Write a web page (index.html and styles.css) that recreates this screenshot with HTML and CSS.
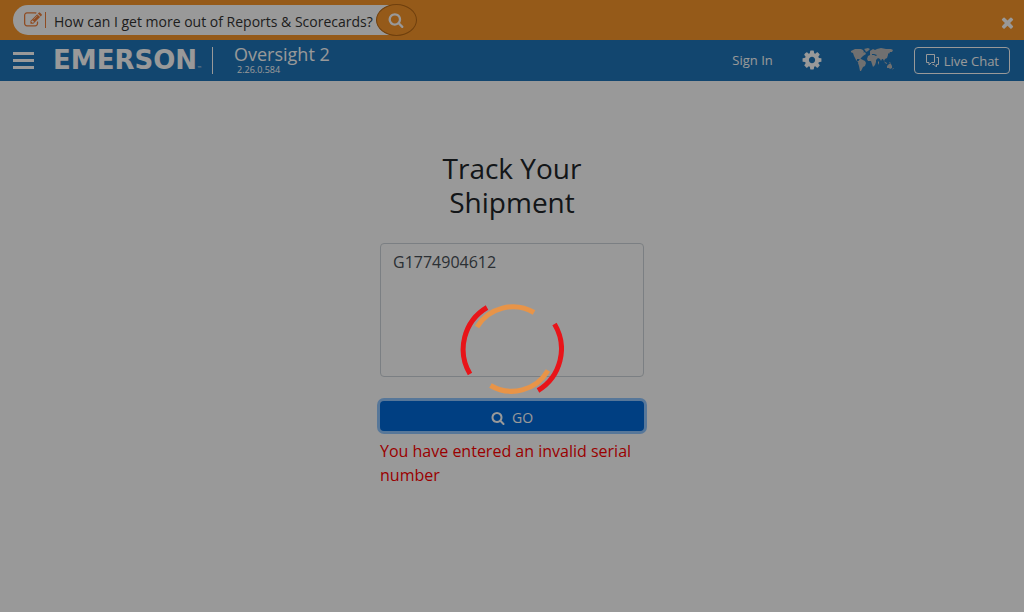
FILE: index.html
```html
<!DOCTYPE html>
<html lang="en">
<head>
<meta charset="utf-8">
<meta name="viewport" content="width=device-width, initial-scale=1">
<title>Oversight 2 - Track Your Shipment</title>
<link rel="stylesheet" href="styles.css">
</head>
<body>
<svg class="sprite" aria-hidden="true">
  <symbol id="search" viewBox="0 0 1792 1792"><path d="M1216 832q0-185-131.5-316.5t-316.5-131.5-316.5 131.5-131.5 316.5 131.5 316.5 316.5 131.5 316.5-131.5 131.5-316.5zm512 832q0 52-38 90t-90 38q-54 0-90-38l-343-342q-179 124-399 124-143 0-273.5-55.5t-225-150-150-225-55.5-273.5 55.5-273.5 150-225 225-150 273.5-55.5 273.5 55.5 225 150 150 225 55.5 273.5q0 220-124 399l343 343q37 37 37 90z"/></symbol>
</svg>

<form class="ask-bar">
  <div class="ask-pill">
    <svg class="icon-edit" viewBox="0 0 1792 1792" aria-hidden="true"><path d="M888 1184l116-116-152-152-116 116v56h96v96h56zm440-720q-16-16-33 1l-350 350q-17 17-1 33t33-1l350-350q17-17 1-33zm80 594v190q0 119-84.5 203.5t-203.5 84.5h-832q-119 0-203.5-84.5t-84.5-203.5v-832q0-119 84.5-203.5t203.5-84.5h832q63 0 117 25 15 7 18 23 3 17-9 29l-49 49q-14 14-32 8-23-6-45-6h-832q-66 0-113 47t-47 113v832q0 66 47 113t113 47h832q66 0 113-47t47-113v-126q0-13 9-22l64-64q15-15 35-7t20 29zm-96-738l288 288-672 672h-288v-288zm444 132l-92 92-288-288 92-92q28-28 68-28t68 28l152 152q28 28 28 68t-28 68z"/></svg>
    <span class="ask-divider"></span>
    <input class="ask-input" type="text" aria-label="Ask a question" value="How can I get more out of Reports &amp; Scorecards?">
  </div>
  <button class="ask-button" type="button" aria-label="Search"><svg class="icon-search-lg" aria-hidden="true"><use href="#search"/></svg></button>
  <button class="close-button" type="button" aria-label="Close"><svg class="icon-close" viewBox="0 0 1792 1792" aria-hidden="true"><path d="M1490 1322q0 40-28 68l-136 136q-28 28-68 28t-68-28l-294-294-294 294q-28 28-68 28t-68-28l-136-136q-28-28-28-68t28-68l294-294-294-294q-28-28-28-68t28-68l136-136q28-28 68-28t68 28l294 294 294-294q28-28 68-28t68 28l136 136q28 28 28 68t-28 68l-294 294 294 294q28 28 28 68z"/></svg></button>
</form>

<header class="header">
  <button class="menu-button" type="button" aria-label="Menu"><span class="bar"></span><span class="bar"></span><span class="bar"></span></button>
  <a class="logo" href="#">EMERSON<span class="trademark">™</span></a>
  <div class="product">
    <span class="product-name">Oversight 2</span>
    <span class="product-version">2.26.0.584</span>
  </div>
  <nav class="tools">
    <a class="sign-in" href="#">Sign In</a>
    <button class="icon-button" type="button" aria-label="Settings"><svg class="icon-cog" viewBox="0 0 1792 1792" aria-hidden="true"><path d="M1152 896q0-106-75-181t-181-75-181 75-75 181 75 181 181 75 181-75 75-181zm512-109v222q0 12-8 23t-20 13l-185 28q-19 54-39 91 35 50 107 138 10 12 10 25t-9 23q-27 37-99 108t-94 71q-12 0-26-9l-138-108q-44 23-91 38-16 136-29 186-7 28-36 28h-222q-14 0-24.500-8.500t-11.500-21.500l-28-184q-49-16-90-37l-141 107q-10 9-25 9-14 0-25-11-126-114-165-168-7-10-7-23 0-12 8-23 15-21 51-66.500t54-70.500q-27-50-41-99l-183-27q-13-2-21-12.500t-8-23.500v-222q0-12 8-23t19-13l186-28q14-46 39-92-40-57-107-138-10-12-10-24 0-10 9-23 26-36 98.500-107.500t94.500-71.500q13 0 26 10l138 107q44-23 91-38 16-136 29-186 7-28 36-28h222q14 0 24.500 8.500t11.500 21.500l28 184q49 16 90 37l142-107q9-9 24-9 13 0 25 10 129 119 165 170 7 8 7 22 0 12-8 23-15 21-51 66.500t-54 70.500q26 50 41 98l183 28q13 2 21 12.500t8 23.500z"/></svg></button>
    <button class="icon-button" type="button" aria-label="Region"><svg class="icon-world" viewBox="0 0 44 24" aria-hidden="true"><path d="M0 3l4-2 6 0 2 1 1 2-1 1 2-1 1 2-3 2-2 2-1 2-1-1-2 0 0 2 2 0 1 2-2-1-2-2-2-4-1-3-3-1zM13 1l4-1 2 1-2 2-2 1-1-2zM8 12l2-1 4 2 1 2-1 3-2 1-1 2-1 2-1 0-1-5-1-3zM19 5l0-2 3-2 2 1 2-1 4-1 5 1 5 0 2 1-1 2-2 0-1 2-1-1 0 2-1 3-2 1-1 2-1-2-1 0-1 2-1-2-2-1-1 1-1 1 0 2-1 3-2 2-1-3-1-3-3 0-1-2 1-3 2-1zM21 6l0 1 2 0 2 1 1-1-3-1zM27 14l1-1 0 2-1 2zM33 13l1 1 2 1 0 1-2-1zM38 14l2 1-1 1zM36 18l2-2 2 0 1 2 0 2-2 1-1-1-2 0zM42 20l1 0-2 2z"/></svg></button>
    <button class="chat-button" type="button"><svg class="icon-chat" viewBox="0 0 15 15" aria-hidden="true"><path d="M1.500 1.500h8v8H6.500L4 12V9.500H1.500zM11.500 4.500h2v7h-2v2.500L9 11.500H7.500"/></svg>Live Chat</button>
  </nav>
</header>

<main class="main">
  <form class="track-form">
    <h1 class="title"><label for="serial">Track Your Shipment</label></h1>
    <textarea class="serial" id="serial">G1774904612</textarea>
    <button class="go-button" type="button"><svg class="icon-search" aria-hidden="true"><use href="#search"/></svg>GO</button>
    <p class="error" role="alert">You have entered an invalid serial number</p>
  </form>
</main>

<div class="overlay" role="status" aria-label="Loading">
  <svg class="spinner" viewBox="0 0 104 104" aria-hidden="true">
    <path class="ring-outer" d="M27 10.500A48.500 48.500 0 0 0 10 77M94.500 27A48.500 48.500 0 0 1 78 93.500"/>
    <path class="ring-inner" d="M17 30A42 42 0 0 1 74 15.500M30.500 88.500A42 42 0 0 0 88 73.500"/>
  </svg>
</div>
</body>
</html>
```

FILE: styles.css
```css
* { box-sizing: border-box; }

body {
  margin: 0;
  background: #fff;
  color: #212529;
  font-family: "Open Sans", sans-serif;
  font-size: 16px;
  line-height: 24px;
}

button, input, textarea { font: inherit; }
button { padding: 0; border: 0; background: none; color: inherit; cursor: pointer; }
a { color: inherit; text-decoration: none; }
svg { display: block; fill: currentColor; }
.sprite { display: none; }

.ask-bar {
  display: flex;
  align-items: center;
  height: 40px;
  padding: 0 8px 0 13px;
  background: #f8962b;
  color: #fff;
}
.ask-pill {
  display: flex;
  align-items: center;
  width: 376px;
  height: 30px;
  padding-left: 11px;
  border-radius: 15px 0 0 15px;
  background: #fff;
  color: #ee7f3b;
}
.icon-edit { width: 18px; height: 18px; }
.ask-divider { width: 1px; height: 16px; margin-left: 3px; background: #ee7f3b; }
.ask-input {
  flex: 1;
  min-width: 0;
  height: 26px;
  padding: 2px 0 0 8px;
  border: 0;
  background: none;
  color: #333;
  font-size: 14px;
  outline: 0;
}
.ask-button {
  display: grid;
  place-items: center;
  width: 41px;
  height: 32px;
  margin-left: -13px;
  padding-right: 2px;
  border: 1px solid #b96a16;
  border-radius: 50%;
  background: #f8962b;
}
.icon-search-lg { width: 16px; height: 16px; }
.close-button { margin: 5px 0 0 auto; }
.icon-close { width: 17px; height: 17px; }

.header {
  display: flex;
  align-items: center;
  height: 41px;
  padding: 0 14px 0 13px;
  background: #1e75b9;
  color: #fff;
}
.menu-button { display: grid; gap: 4px; width: 21px; }
.bar { height: 3px; background: #fff; }
.logo {
  display: flex;
  align-items: flex-end;
  height: 27px;
  margin-left: 19px;
  padding-right: 10px;
  border-right: 1px solid #fff;
  font-family: "DejaVu Sans", sans-serif;
  font-size: 26px;
  font-weight: bold;
  line-height: 28px;
}
.trademark { font-size: 5px; font-weight: normal; line-height: 12px; }
.product { display: flex; flex-direction: column; margin-left: 21px; padding-bottom: 2px; }
.product-name { font-size: 18px; line-height: 20px; }
.product-version { padding-left: 3px; font-size: 9px; line-height: 12px; }
.tools { display: flex; align-items: center; margin-left: auto; font-size: 13px; }
.sign-in, .icon-button { padding-bottom: 2px; }
.icon-button { margin-left: 28px; }
.icon-cog { width: 22px; height: 22px; }
.icon-world { width: 44px; height: 24px; color: #bbb; }
.chat-button {
  display: flex;
  align-items: center;
  gap: 4px;
  height: 27px;
  margin-left: 19px;
  padding: 0 10px;
  border: 1px solid #fff;
  border-radius: 4px;
}
.icon-chat { width: 15px; height: 15px; fill: none; stroke: currentColor; }

.main { padding: 70px 16px 24px; }
.track-form { display: flex; flex-direction: column; max-width: 264px; margin: 0 auto; }
.title {
  margin: 0;
  padding: 0 32px;
  font-size: 28px;
  font-weight: 400;
  line-height: 34px;
  text-align: center;
}
.serial {
  height: 134px;
  margin-top: 24px;
  padding: 6px 12px;
  border: 1px solid #ced4da;
  border-radius: 4px;
  background: #fff;
  color: #495057;
  resize: none;
}
.go-button {
  display: flex;
  align-items: center;
  justify-content: center;
  gap: 7px;
  height: 30px;
  margin-top: 24px;
  padding-top: 4px;
  border-radius: 4px;
  background: #0069d9;
  box-shadow: 0 0 0 3px #92c7ff;
  color: #fff;
  font-size: 14px;
}
.icon-search { width: 14px; height: 14px; }
.error { margin: 8px 0 0; color: #f00; }

.overlay {
  position: fixed;
  inset: 0;
  display: grid;
  place-items: center;
  padding-top: 85px;
  background: rgba(0, 0, 0, 0.4);
}
.spinner { width: 104px; height: 104px; fill: none; stroke-width: 5; }
.ring-outer { stroke: #e81419; }
.ring-inner { stroke: #e89448; }
```
